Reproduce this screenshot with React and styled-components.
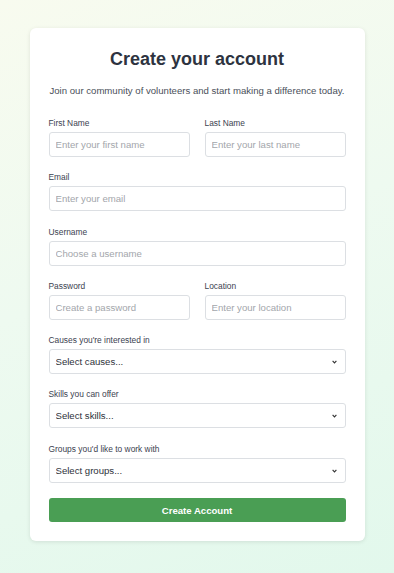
import React from "react";
import styled, { createGlobalStyle } from "styled-components";

const Global = createGlobalStyle`
  html, body { margin: 0; padding: 0; }
  body {
    font-family: "Liberation Sans", Arial, Helvetica, sans-serif;
    background: linear-gradient(160deg, #f8fbef 0%, #eefaf0 45%, #e2f8ec 100%);
    min-height: 573px;
  }
  * { box-sizing: border-box; }
`;

const Page = styled.div`
  min-height: 573px;
  padding: 28px 0 32px;
  display: flex;
  justify-content: center;
  align-items: flex-start;
`;

const Card = styled.div`
  width: 335px;
  background: #ffffff;
  border-radius: 6px;
  box-shadow: 0 1px 4px rgba(0, 0, 0, 0.1);
  padding: 20px 19px 19px 19px;
`;

const Title = styled.h1`
  margin: 0;
  font-size: 18px;
  line-height: 22px;
  font-weight: 700;
  color: #2d3340;
  text-align: center;
`;

const Subtitle = styled.p`
  margin: 14px 0 19px;
  font-size: 9.6px;
  line-height: 14px;
  color: #4a4f5a;
  text-align: center;
  white-space: nowrap;
`;

const Row = styled.div`
  display: grid;
  grid-template-columns: 1fr 1fr;
  column-gap: 15px;
`;

const Field = styled.div`
  display: flex;
  flex-direction: column;
  gap: 3px;
  margin-bottom: 14.25px;
`;

const Label = styled.label`
  font-size: 8.4px;
  line-height: 12px;
  color: #3c4250;
`;

const Input = styled.input`
  height: 25px;
  width: 100%;
  border: 1px solid #dcdfe3;
  border-radius: 3px;
  padding: 0 6px;
  font-family: inherit;
  font-size: 9.6px;
  color: #333;
  background: #fff;
  outline: none;
  &::placeholder { color: #a3a6ab; }
`;

const SelectWrap = styled.div`
  position: relative;
  height: 25px;
`;

const Select = styled.select`
  appearance: none;
  -webkit-appearance: none;
  height: 25px;
  width: 100%;
  border: 1px solid #dcdfe3;
  border-radius: 3px;
  padding: 0 6px;
  font-family: inherit;
  font-size: 9.6px;
  color: #2e323a;
  background: #fff;
  outline: none;
`;

const Chevron = styled.svg`
  position: absolute;
  right: 9px;
  top: 11px;
  width: 5px;
  height: 4px;
  pointer-events: none;
`;

const Button = styled.button`
  margin-top: 1.5px;
  width: 100%;
  height: 24px;
  border: none;
  border-radius: 3px;
  background: #4a9e54;
  color: #fff;
  font-family: inherit;
  font-size: 9.6px;
  font-weight: 700;
  cursor: pointer;
`;

const TextField = ({ label, placeholder, type = "text" }) => (
  <Field>
    <Label>{label}</Label>
    <Input type={type} placeholder={placeholder} />
  </Field>
);

const SelectField = ({ label, placeholder }) => (
  <Field>
    <Label>{label}</Label>
    <SelectWrap>
      <Select defaultValue="">
        <option value="">{placeholder}</option>
      </Select>
      <Chevron viewBox="0 0 5 4">
        <path d="M0.6 0.8 L2.5 2.9 L4.4 0.8" fill="none" stroke="#333" strokeWidth="1.1" />
      </Chevron>
    </SelectWrap>
  </Field>
);

export default function App() {
  return (
    <>
      <Global />
      <Page>
        <Card>
          <Title>Create your account</Title>
          <Subtitle>Join our community of volunteers and start making a difference today.</Subtitle>
          <Row>
            <TextField label="First Name" placeholder="Enter your first name" />
            <TextField label="Last Name" placeholder="Enter your last name" />
          </Row>
          <TextField label="Email" placeholder="Enter your email" type="email" />
          <TextField label="Username" placeholder="Choose a username" />
          <Row>
            <TextField label="Password" placeholder="Create a password" type="password" />
            <TextField label="Location" placeholder="Enter your location" />
          </Row>
          <SelectField label="Causes you're interested in" placeholder="Select causes..." />
          <SelectField label="Skills you can offer" placeholder="Select skills..." />
          <SelectField label="Groups you'd like to work with" placeholder="Select groups..." />
          <Button>Create Account</Button>
        </Card>
      </Page>
    </>
  );
}
